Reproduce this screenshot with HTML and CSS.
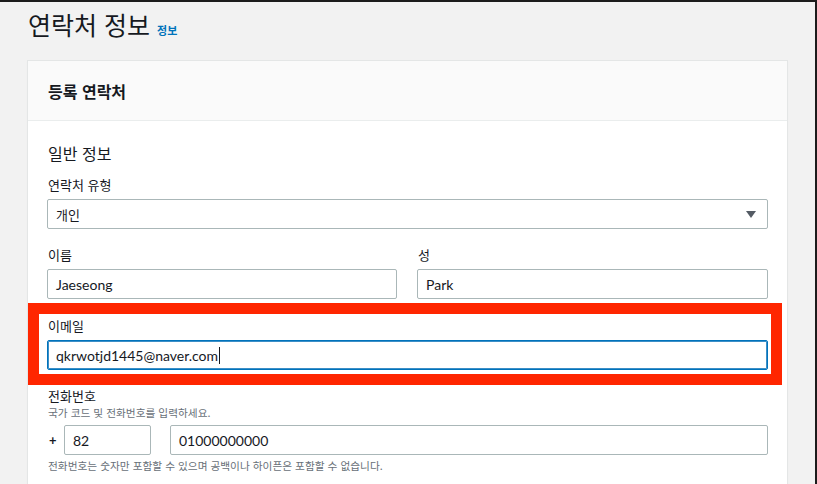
FILE: index.html
```html
<!DOCTYPE html>
<html lang="ko">
<head>
<meta charset="utf-8">
<link rel="stylesheet" href="styles.css">
</head>
<body>
<div class="app">
  <div class="page-head">
    <h1 class="title">연락처 정보</h1>
    <a class="info-link">정보</a>
  </div>
  <section class="card">
    <div class="card-head">등록 연락처</div>
    <div class="card-body">
      <h2 class="section-title">일반 정보</h2>
      <div class="field">
        <div class="label">연락처 유형</div>
        <div class="select">
          <span>개인</span>
          <svg class="caret-icon" width="10" height="7" viewBox="0 0 10 7"><path d="M0 0H10L5 7Z" fill="#545b64"/></svg>
        </div>
      </div>
      <div class="row2">
        <div class="field">
          <div class="label">이름</div>
          <div class="input">Jaeseong</div>
        </div>
        <div class="field">
          <div class="label">성</div>
          <div class="input">Park</div>
        </div>
      </div>
      <div class="field">
        <div class="label">이메일</div>
        <div class="input focused">qkrwotjd1445@naver.com<span class="cursor"></span></div>
      </div>
      <div class="field">
        <div class="label">전화번호</div>
        <div class="hint top">국가 코드 및 전화번호를 입력하세요.</div>
        <div class="phone-row">
          <span class="plus">+</span>
          <div class="input code">82</div>
          <div class="input phone">01000000000</div>
        </div>
        <div class="hint">전화번호는 숫자만 포함할 수 있으며 공백이나 하이픈은 포함할 수 없습니다.</div>
      </div>
    </div>
  </section>
  <div class="highlight"></div>
</div>
</body>
</html>
```

FILE: styles.css
```css
html {
  background: #1c1c1c;
}
body {
  margin: 0;
  font-family: "Lato", "Noto Sans CJK KR", sans-serif;
  color: #16191f;
}
.app {
  position: relative;
  margin: 2px 2px 0 0;
  height: 482px;
  overflow: hidden;
  background: #f2f2f2;
}
.page-head {
  display: flex;
  align-items: baseline;
  padding: 5px 0 0 28px;
  height: 54px;
  box-sizing: border-box;
}
.title {
  margin: 0;
  font-family: "Noto Sans CJK KR", sans-serif;
  font-size: 25px;
  font-weight: 400;
  line-height: 34px;
}
.info-link {
  margin-left: 7px;
  font-family: "Noto Sans CJK KR", sans-serif;
  font-size: 11px;
  font-weight: 700;
  color: #0073bb;
}
.card {
  margin: 5px 0 0 28px;
  width: 759px;
  background: #fff;
  box-shadow: 0 0 0 1px #e4e6e6, 0 1px 2px rgba(0,0,0,0.08);
}
.card-head {
  height: 60px;
  box-sizing: border-box;
  padding: 0 20px;
  display: flex;
  align-items: center;
  background: #fafafa;
  border-bottom: 1px solid #eaeded;
  font-family: "Noto Sans CJK KR", sans-serif;
  font-size: 16px;
  font-weight: 700;
}
.card-body {
  padding: 20px 19px 30px;
}
.section-title {
  margin: 0 0 9px 1px;
  font-family: "Noto Sans CJK KR", sans-serif;
  font-size: 16px;
  font-weight: 400;
  line-height: 24px;
}
.field {
  margin-bottom: 15px;
}
.label {
  font-family: "Noto Sans CJK KR", sans-serif;
  font-size: 13px;
  line-height: 22px;
  margin: 0 0 3px 1px;
}
.select, .input {
  height: 30px;
  box-sizing: border-box;
  border: 1px solid #aab7b8;
  border-radius: 2px;
  padding: 0 8px;
  display: flex;
  align-items: center;
  font-size: 14px;
  background: #fff;
}
.select {
  justify-content: space-between;
  font-family: "Noto Sans CJK KR", sans-serif;
  font-size: 13px;
  padding-right: 11px;
}
.row2 {
  display: grid;
  grid-template-columns: 350px 1fr;
  gap: 20px;
}
.row2 .field {
  margin-bottom: 16px;
}
.focused {
  border-color: #0073bb;
  box-shadow: 0 0 0 1px #3d8fc7 inset;
}
.cursor {
  display: inline-block;
  width: 1px;
  height: 17px;
  background: #16191f;
  margin-left: 1px;
}
.hint {
  font-family: "Noto Sans CJK KR", sans-serif;
  font-size: 10.7px;
  color: #687078;
  line-height: 16px;
  margin-left: 1px;
}
.hint.top {
  margin: -5px 0 4px 1px;
}
.phone-row {
  display: flex;
  align-items: center;
  margin-bottom: 3px;
}
.plus {
  width: 17px;
  padding-left: 2px;
  box-sizing: border-box;
  font-size: 13px;
  font-weight: 700;
}
.code {
  width: 87px;
  margin-right: 19px;
}
.phone {
  flex: 1;
}
.highlight {
  position: absolute;
  left: 28px;
  top: 301px;
  width: 754px;
  height: 82px;
  box-sizing: border-box;
  border: 11px solid #ff2600;
}
```
